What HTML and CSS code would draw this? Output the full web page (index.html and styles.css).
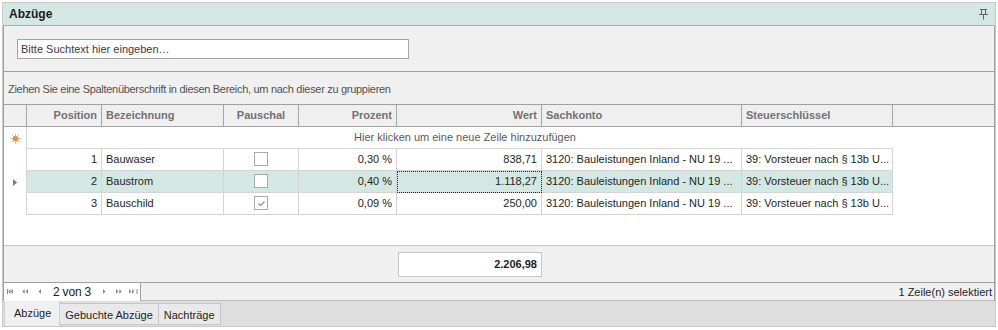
FILE: index.html
```html
<!DOCTYPE html>
<html lang="de">
<head>
<meta charset="utf-8">
<title>Abzüge</title>
<link rel="stylesheet" href="styles.css">
</head>
<body>
<div class="panel">
  <div class="title">
    <span class="title-text">Abzüge</span>
    <svg class="pin" width="9" height="11" viewBox="0 0 9 11"><path d="M1 0.5H8M2.5 0.5V5.5M6.5 0.5V5.5M0 5.5H9M4.5 5.5V10.5" stroke="#606060" stroke-width="1" fill="none"/></svg>
  </div>
  <div class="content">
    <div class="search">
      <div class="input">Bitte Suchtext hier eingeben…</div>
    </div>
    <div class="group">Ziehen Sie eine Spaltenüberschrift in diesen Bereich, um nach dieser zu gruppieren</div>
    <div class="grid">
      <div class="row head">
        <div class="c ind"></div>
        <div class="c r">Position</div>
        <div class="c">Bezeichnung</div>
        <div class="c m">Pauschal</div>
        <div class="c r">Prozent</div>
        <div class="c r">Wert</div>
        <div class="c">Sachkonto</div>
        <div class="c">Steuerschlüssel</div>
        <div class="c fill"></div>
      </div>
      <div class="row newrow">
        <div class="c ind">
          <svg width="11" height="11" viewBox="0 0 11 11"><g stroke="#f3b27a" stroke-width="1"><path d="M5.5 0.5V10.5M0.5 5.5H10.5M2 2L9 9M9 2L2 9"/></g><circle cx="5.5" cy="5.5" r="2.6" fill="#ef8a3a"/></svg>
        </div>
        <div class="c span">Hier klicken um eine neue Zeile hinzuzufügen</div>
        <div class="c fill"></div>
      </div>
      <div class="row data">
        <div class="c ind"></div>
        <div class="c r">1</div>
        <div class="c">Bauwaser</div>
        <div class="c m"><span class="chk"></span></div>
        <div class="c r">0,30 %</div>
        <div class="c r">838,71</div>
        <div class="c">3120: Bauleistungen Inland - NU 19 ...</div>
        <div class="c">39: Vorsteuer nach § 13b U...</div>
        <div class="c fill"></div>
      </div>
      <div class="row data sel">
        <div class="c ind">
          <svg width="4" height="7" viewBox="0 0 4 7"><path d="M0 0L4 3.5L0 7Z" fill="#7a7a7a"/></svg>
        </div>
        <div class="c r">2</div>
        <div class="c">Baustrom</div>
        <div class="c m"><span class="chk"></span></div>
        <div class="c r">0,40 %</div>
        <div class="c r focus">1.118,27</div>
        <div class="c">3120: Bauleistungen Inland - NU 19 ...</div>
        <div class="c">39: Vorsteuer nach § 13b U...</div>
        <div class="c fill"></div>
      </div>
      <div class="row data">
        <div class="c ind"></div>
        <div class="c r">3</div>
        <div class="c">Bauschild</div>
        <div class="c m"><span class="chk"><svg width="11" height="11" viewBox="0 0 11 11"><path d="M2.5 5.5L4.5 7.5L8.5 3.5" stroke="#8a8a8a" stroke-width="1.2" fill="none"/></svg></span></div>
        <div class="c r">0,09 %</div>
        <div class="c r">250,00</div>
        <div class="c">3120: Bauleistungen Inland - NU 19 ...</div>
        <div class="c">39: Vorsteuer nach § 13b U...</div>
        <div class="c fill"></div>
      </div>
    </div>
    <div class="footer">
      <div class="total">2.206,98</div>
    </div>
    <div class="navbar">
      <div class="nav">
        <svg class="n1" width="6" height="5" viewBox="0 0 6 5"><path d="M0.5 0V5" stroke="#8a8a8a"/><path d="M3.5 0L1.2 2.5L3.5 5ZM6 0L3.7 2.5L6 5Z" fill="#8a8a8a"/></svg>
        <svg class="n2" width="6" height="5" viewBox="0 0 6 5"><path d="M2.7 0L0.3 2.5L2.7 5ZM6 0L3.5 2.5L6 5Z" fill="#8a8a8a"/></svg>
        <svg class="n3" width="3" height="5" viewBox="0 0 3 5"><path d="M3 0L0.5 2.5L3 5Z" fill="#8a8a8a"/></svg>
        <span class="page">2 von 3</span>
        <svg class="n4" width="3" height="5" viewBox="0 0 3 5"><path d="M0 0L2.5 2.5L0 5Z" fill="#8a8a8a"/></svg>
        <svg class="n5" width="6" height="5" viewBox="0 0 6 5"><path d="M0 0L2.5 2.5L0 5ZM3.3 0L5.7 2.5L3.3 5Z" fill="#8a8a8a"/></svg>
        <svg class="n6" width="9" height="5" viewBox="0 0 9 5"><path d="M0 0L2.3 2.5L0 5ZM3 0L5.3 2.5L3 5Z" fill="#8a8a8a"/><path d="M8 0V5" stroke="#8a8a8a"/></svg>
      </div>
      <div class="status">1 Zeile(n) selektiert</div>
    </div>
  </div>
  <div class="tabs">
    <div class="tab active">Abzüge</div>
    <div class="tab">Gebuchte Abzüge</div>
    <div class="tab">Nachträge</div>
  </div>
</div>
</body>
</html>
```
FILE: styles.css
```css
* { box-sizing: border-box; }
body {
  margin: 0;
  background: #ffffff;
  font-family: "Liberation Sans", Arial, sans-serif;
  font-size: 11px;
  color: #1e1e1e;
}
.panel {
  margin: 2px 2px 0 2px;
  border: 1px solid #c9c9c9;
  background: #f0f0f0;
}
.title {
  height: 23px;
  background: #d3e8e2;
  border-bottom: 1px solid #a9b2b0;
  display: flex;
  align-items: center;
  justify-content: space-between;
  padding: 0 7px 0 6px;
}
.title-text {
  font-weight: bold;
  font-size: 12px;
  color: #1a1a1a;
}
.pin { display: block; }
.content {
  border-left: 1px solid #a0a0a0;
  border-right: 1px solid #a0a0a0;
}
.search {
  height: 46px;
  padding: 13px 0 0 13px;
  border-bottom: 1px solid #a0a0a0;
}
.input {
  width: 392px;
  height: 20px;
  background: #ffffff;
  border: 1px solid #a5a5a5;
  padding: 0 0 0 3px;
  line-height: 18px;
  color: #3c3c3c;
}
.group {
  height: 33px;
  border-bottom: 1px solid #a0a0a0;
  padding: 1px 0 0 4px;
  line-height: 33px;
  color: #505050;
  letter-spacing: -0.3px;
}
.grid {
  height: 141px;
  background: #ffffff;
  border-bottom: 1px solid #c8c8c8;
}
.row {
  display: grid;
  grid-template-columns: 23px 75px 122px 75px 98px 145px 200px 151px 1fr;
  height: 22px;
}
.c {
  height: 22px;
  line-height: 21px;
  padding: 0 4px;
  white-space: nowrap;
  overflow: hidden;
}
.c.r { text-align: right; }
.c.m { text-align: center; }
.head .c {
  background: #efefef;
  border-right: 1px solid #a6a6a6;
  border-bottom: 1px solid #a6a6a6;
  font-weight: bold;
  color: #727272;
}
.head .c.fill { border-right: none; }
.ind {
  display: flex;
  align-items: center;
  justify-content: center;
  padding: 0;
}
.ind svg { display: block; }
.newrow .ind, .data .ind {
  border-right: 1px solid #d4d4d4;
  background: #ffffff;
}
.newrow .span {
  grid-column: 2 / 9;
  border-bottom: 1px solid #d4d4d4;
  text-align: center;
  padding-left: 14px;
  color: #5a5a5a;
}
.data .c:not(.ind):not(.fill) {
  border-right: 1px solid #d4d4d4;
  border-bottom: 1px solid #d4d4d4;
}
.sel .c:not(.ind):not(.fill) { background: #d3e8e2; }
.focus {
  outline: 1px dotted #222222;
  outline-offset: -1px;
}
.chk {
  display: inline-block;
  vertical-align: middle;
  width: 14px;
  height: 14px;
  margin-top: -2px;
  border: 1px solid #a9a9a9;
  background: #ffffff;
}
.chk svg { display: block; margin: 0.5px 0 0 0.5px; }
.footer {
  height: 37px;
  border-bottom: 1px solid #a0a0a0;
  padding: 6px 0 0 394px;
}
.total {
  width: 144px;
  height: 25px;
  background: #ffffff;
  border: 1px solid #c8c8c8;
  text-align: right;
  padding-right: 4px;
  line-height: 23px;
  font-weight: bold;
  color: #1e1e1e;
}
.navbar {
  height: 18px;
  display: flex;
  align-items: center;
  justify-content: space-between;
  border-bottom: 1px solid #bdbdbd;
}
.nav {
  width: 137px;
  height: 18px;
  background: #ffffff;
  border-right: 1px solid #a0a0a0;
  display: flex;
  align-items: center;
  padding-left: 3px;
  flex-shrink: 0;
}
.nav svg { display: block; flex-shrink: 0; }
.n2 { margin-left: 9px; }
.n3 { margin-left: 10px; }
.n4 { margin-left: 12px; }
.n5 { margin-left: 10px; }
.n6 { margin-left: 7px; }
.nav .page {
  margin-left: 12px;
  font-size: 12px;
  color: #222;
  white-space: nowrap;
  letter-spacing: -0.2px;
}
.status {
  padding-right: 2px;
  color: #1e1e1e;
}
.tabs {
  height: 25px;
  background: #dedede;
  display: flex;
  align-items: stretch;
  padding-left: 1px;
}
.tab {
  padding: 0 5px;
  line-height: 22px;
  margin-top: 2px;
  height: 22px;
  background: #e9e9e9;
  border: 1px solid #c6c6c6;
  border-left: none;
  color: #1e1e1e;
  white-space: nowrap;
}
.tab.active {
  margin-top: 0;
  height: 25px;
  line-height: 24px;
  padding: 0 8px 0 9px;
  background: #f0f0f0;
  border: 1px solid #d0d0d0;
  border-bottom: none;
  border-top: none;
}
```
